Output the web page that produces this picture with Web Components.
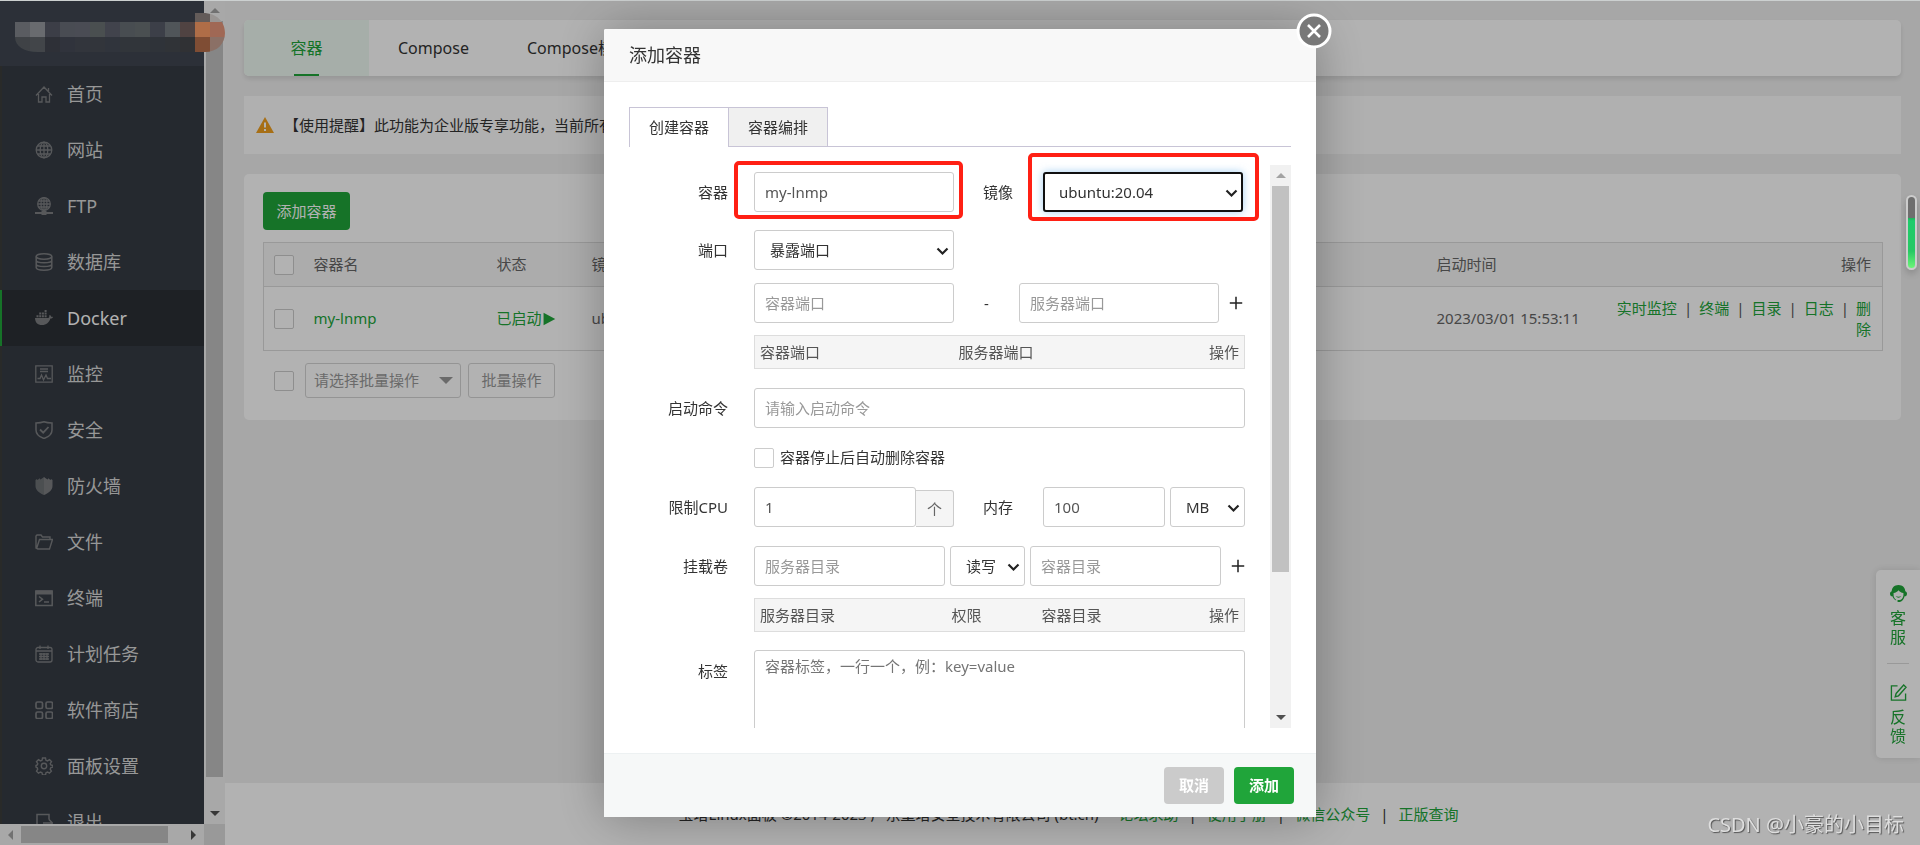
<!DOCTYPE html>
<html lang="zh-CN">
<head>
<meta charset="utf-8">
<title>Docker - 容器</title>
<style>
  html, body { margin: 0; height: 100%; }
  body { font: 15px/21px "Noto Sans", "Noto Sans CJK SC", sans-serif; color: #333; background: #f0f0f0; overflow: hidden; }
</style>
</head>
<body>
<panel-app></panel-app>
<script>
/* Registers an element whose shadow root is cloned from the markup; setup(root, element) runs on connection */
const define = (name, html, setup = () => {}) => {
  const template = document.createElement('template');
  template.innerHTML = html;
  customElements.define(name, class extends HTMLElement {
    constructor() {
      super();
      this.attachShadow({ mode: 'open' }).append(template.content.cloneNode(true));
    }
    connectedCallback() {
      setup(this.shadowRoot, this);
    }
  });
};

/* Icons, chosen by the "name" attribute */
const icons = {
  home: '<g fill="none" stroke="currentColor" stroke-width="1.3"><path d="M1 10.500 9 2l8 8.500M3.500 9v8H7v-5h4v5h3.500V9M13.500 6V3"/></g>',
  globe: '<g fill="none" stroke="currentColor" stroke-width="1.3"><circle cx="9" cy="9" r="7.800"/><ellipse cx="9" cy="9" rx="3.800" ry="7.800"/><path d="M9 1v16M1 9h16M2.500 5h13M2.500 13h13"/></g>',
  ftp: '<g fill="none" stroke="currentColor" stroke-width="1.3"><circle cx="9" cy="7" r="6.300"/><ellipse cx="9" cy="7" rx="3" ry="6.300"/><path d="M9 1v12M3 7h12M3.500 4h11M3.500 10h11"/><path d="M0 16h18" stroke-width="2"/></g><rect x="6.500" y="14" width="5" height="4" fill="currentColor"/>',
  database: '<g fill="none" stroke="currentColor" stroke-width="1.5"><ellipse cx="9" cy="3.500" rx="7.800" ry="2.700"/><path d="M1.200 3.500v11c0 3.500 15.600 3.500 15.600 0v-11M1.200 7.200c0 3.400 15.600 3.400 15.600 0M1.200 10.900c0 3.400 15.600 3.400 15.600 0"/></g>',
  docker: '<g fill="currentColor"><path d="M0 9h13c1 0 1.500-.8 1.200-2.500l.8-.5c.8.500 1 1 1.100 1.700.7-.1 1.500 0 1.900.3-.4 1-1.300 1.500-2.600 1.500C14 13.500 11.500 16 7 16 2.500 16 .2 13.500 0 9z"/><path d="M1.500 6.200h2v2h-2zM4.200 6.200h2v2h-2zM6.900 6.200h2v2h-2zM9.600 6.200h2v2h-2zM4.200 3.600h2v2h-2zM6.900 3.600h2v2h-2zM9.600 3.600h2v2h-2zM9.600 1h2v2h-2z"/></g>',
  monitor: '<g fill="none" stroke="currentColor" stroke-width="1.3"><path d="M.8.800h16.400v16.400H.8zM5 4h8M5 6.500h8M2.500 13.500H5L6.500 10l2 5 2.500-5 1.500 3.500h3.500"/></g>',
  shield: '<g fill="none" stroke="currentColor" stroke-width="1.5"><path d="M9 .800c3 1.200 5.500 1.200 8 1.200v7c0 4-3.500 7-8 8.500C4.500 16 1 13 1 9V2c2.500 0 5 0 8-1.200z"/><path d="m5 8.500 3.200 3.200L13.500 6" stroke-width="1.8"/></g>',
  wall: '<path fill="currentColor" opacity=".8" d="M9 0v18C4 16 .5 13 .5 9V3L2 2v1l2-1V1l1.500 1.500L7 1.500z"/><path fill="currentColor" d="M9 0v18c5-2 8.500-5 8.500-9V3L16 2v1l-2-1V1l-1.500 1.500-1.500-1z"/>',
  folder: '<path fill="none" stroke="currentColor" stroke-width="1.4" d="M3 16 1 15V3l1-1h4l1.500 2H15v2.500M1.500 15.800 4.500 6.500h13L14.500 16H2"/>',
  terminal: '<g fill="none" stroke="currentColor" stroke-width="1.5"><path d="M.8 2h16.400v14.500H.8zM4 7.500l3.500 2.700L4 13M9 13h5"/></g><path fill="currentColor" d="M1 1.500h16v4H1z"/>',
  calendar: '<g fill="none" stroke="currentColor" stroke-width="1.3"><rect x="1" y="2.500" width="16" height="14.500" rx="2"/><path d="M1 6h16M5 .500V4M13 .500V4M4 9h10M4 11.500h10M4 14h10M6 8v7M9 8v7M12 8v7"/></g>',
  apps: '<g fill="none" stroke="currentColor" stroke-width="1.7"><rect x="1" y="1" width="6.500" height="6.500" rx="1.500"/><rect x="11" y="1" width="6.500" height="6.500" rx="1.500"/><rect x="1" y="11" width="6.500" height="6.500" rx="1.500"/><rect x="11" y="11" width="6.500" height="6.500" rx="1.500"/></g>',
  gear: '<g fill="none" stroke="currentColor" stroke-width="1.4"><circle cx="9" cy="9" r="2.700"/><path d="M7.500 1h3l.5 2.300 1.500.6 2-1.300 2 2.100-1.300 2 .6 1.300 2.200.5v1.500l-2.200.7-.6 1.500 1.200 2-2 2-1.900-1.200-1.500.7-.5 2.300h-3L7 15.700l-1.500-.7-2 1.200-2-2 1.200-2-.5-1.500L1 10V8.500L2.200 8l.6-1.300-1.300-2 2-2.100 2 1.300L7 3.300z"/></g>',
  exit: '<path fill="none" stroke="currentColor" stroke-width="1.5" d="M14 6.500V1.500H2V17h11M8 10h9M14 6.500l3.500 3.500-3.500 3.500"/>',
  warn: '<path fill="#f0a020" d="M9 1 18 17H0z"/><path stroke="#fff" stroke-width="2" d="M9 6.500v5M9 13v2"/>',
  service: '<path fill="currentColor" d="M9 0C4.500 0 2 3 1.800 6.500.500 7 0 8 0 9.200c0 1.600 1 2.800 2.500 2.800.8 2 2 3.500 4 4.500v-1C5 14.500 4 13 3.800 11V8.500C6 8.200 8 7 9 5.500c1 1.500 3 2.700 5.200 3V11c-.4 3-2 4.500-4.200 5H8v2h2.500c2.500-.8 4.200-2.800 5-6 1.500 0 2.500-1.200 2.500-2.800 0-1.200-.500-2.200-1.800-2.700C16 3 13.500 0 9 0zM6 12c1.500 2 4.500 2 6 0-1.500.7-4.500.7-6 0z"/>',
  edit: '<path fill="none" stroke="currentColor" stroke-width="1.4" d="M8 2H1.500v15h15v-7M14.500 1 17 3.500 9 12.500l-3.500 1 1-3.500z"/>',
  chevron: '<path fill="none" stroke="#222" stroke-width="2.6" d="m3 6.500 6 6 6-6"/>',
  plus: '<path stroke="#222" stroke-width="1.7" d="M9 2v14M2 9h14"/>',
  caret: '<path fill="#999" d="M2 5h14l-7 7z"/>',
  play: '<path fill="currentColor" d="M2 1v16L17 9z"/>',
  close: '<circle cx="9" cy="9" r="8" fill="#787878" stroke="#fff" stroke-width="1.5"/><path stroke="#fff" stroke-width="1.3" d="m6 6 6 6m0-6-6 6"/>'
};
customElements.define('ui-icon', class extends HTMLElement {
  constructor() {
    super();
    this.attachShadow({ mode: 'open' });
  }
  connectedCallback() {
    this.shadowRoot.innerHTML = `<style>:host{display:inline-block;width:18px;height:18px;flex:none}svg{display:block;width:100%;height:100%}</style>
      <svg viewBox="0 0 18 18" aria-hidden="true">${icons[this.getAttribute('name')] || ''}</svg>`;
  }
});

/* Scroll bar: arrow, track with a thumb (sized by --thumb), arrow */
define('scroll-bar', `
<style>
  :host { display: flex; flex-direction: column; align-items: center; width: 21px; background: #f1f1f1; }
  :host([horizontal]) { flex-direction: row; width: auto; height: 21px; }
  i { flex: none; width: 21px; height: 21px; display: grid; place-items: center; }
  i::before { content: ""; border: 5px solid transparent; border-top-width: 0; border-bottom-color: #a3a3a3; }
  i.end::before { border: 5px solid transparent; border-bottom-width: 0; border-top-color: #505050; }
  :host([horizontal]) i::before { border: 5px solid transparent; border-left-width: 0; border-right-color: #a3a3a3; }
  :host([horizontal]) i.end::before { border: 5px solid transparent; border-right-width: 0; border-left-color: #505050; }
  .track { flex: 1; width: 17px; display: flex; flex-direction: column; }
  .thumb { flex: 0 0 var(--thumb); background: #c1c1c1; }
  :host([horizontal]) .track { flex-direction: row; width: auto; height: 17px; }
</style>
<i></i><div class="track"><div class="thumb"></div></div><i class="end"></i>`);

define('menu-item', `
<style>
  :host { display: block; height: 56px; }
  a { display: flex; align-items: center; gap: 14px; height: 56px; box-sizing: border-box; padding-left: 33px; border-left: 2px solid #3b3d3c;
      font-size: 18px; color: #d8d8d8; text-decoration: none; white-space: nowrap; }
  ui-icon { color: #7d7f82; }
  :host([active]) a { background: #2c3035; border-color: #20a53a; color: #fff; }
  :host([active]) ui-icon { color: #a3a3a3; }
</style>
<a href="#"><slot name="icon"></slot><span><slot></slot></span></a>`);

define('side-menu', `
<style>
  :host { display: grid; grid-template: minmax(0, 1fr) 21px / minmax(0, 1fr) 21px; height: 100vh; background: #353b44; }
  .view { overflow: hidden; }
  header { height: 66px; background: #3f4651; }
  ui-icon { color: #7d7f82; }
  .v { --thumb: 756px; }
  .h { --thumb: 147px; }
  .corner { background: #dcdcdc; }
</style>
<div class="view">
  <header></header>
  <nav></nav>
</div>
<scroll-bar class="v"></scroll-bar>
<scroll-bar class="h" horizontal></scroll-bar>
<div class="corner"></div>`, root => {
  const items = [['home', '首页'], ['globe', '网站'], ['ftp', 'FTP'], ['database', '数据库'], ['docker', 'Docker'], ['monitor', '监控'],
    ['shield', '安全'], ['wall', '防火墙'], ['folder', '文件'], ['terminal', '终端'], ['calendar', '计划任务'], ['apps', '软件商店'], ['gear', '面板设置'], ['exit', '退出']];
  root.querySelector('nav').innerHTML = items.map(([icon, text]) =>
    `<menu-item${icon === 'docker' ? ' active' : ''}><ui-icon slot="icon" name="${icon}"></ui-icon>${text}</menu-item>`).join('');
});

define('account-badge', `
<style>
  :host { display: block; width: 228px; height: 66px; }
  svg { display: block; }
</style>
<svg width="228" height="66" aria-hidden="true">
  <clipPath id="c"><path d="M15 22h180v-9h8c14 0 22 9 22 20s-8 19-20 19H38C24 52 15 46 15 37z"/></clipPath>
  <g clip-path="url(#c)" id="g"></g>
</svg>`, root => {
  const top = ['#81858b', '#979aa0', '#565a66', '#696d78', '#6a6d79', '#6b7273', '#5d616d', '#686f74', '#6b7274', '#575b67', '#737a80', '#73615f', '#fb9c66', '#e5967a'];
  const low = ['#5b5f65', '#5f6469', '#42464f', '#464a56', '#484d57', '#484d55', '#464b56', '#474c54', '#474c54', '#444952', '#454a50', '#45474b', '#b66f4b', '#c7a193'];
  const cell = (x, y, h, fill) => `<rect x="${x}" y="${y}" width="15" height="${h}" fill="${fill}"/>`;
  root.getElementById('g').innerHTML =
    cell(195, 13, 9, '#8f8380') + cell(210, 13, 9, '#dcd6d3') +
    top.map((c, i) => cell(15 + i * 15, 22, 15, c)).join('') +
    low.map((c, i) => cell(15 + i * 15, 37, 15, c)).join('');
});

define('tab-bar', `
<style>
  :host { display: flex; height: 56px; background: #fff; border-radius: 5px; box-shadow: 0 3px 5px rgba(0,0,0,.1); }
  a { display: grid; justify-items: center; grid-template-rows: 54px 2px; padding: 0 29px; color: #333; text-decoration: none; font-size: 16px; line-height: 56px; white-space: nowrap; }
  a.on { background: #eefaf2; color: #20a53a; padding: 0; width: 125px; border-radius: 5px 0 0 5px; }
  a.on::after { content: ""; width: 25px; background: #20a53a; }
</style>
<a class="on" href="#">容器</a><a href="#">Compose</a><a href="#">Compose模板</a>`);

define('alert-bar', `
<style>
  :host { display: flex; align-items: center; gap: 10px; height: 58px; padding-left: 12px; background: #fcfcfc; white-space: nowrap; }
</style>
<ui-icon name="warn"></ui-icon><span><slot></slot></span>`);

define('container-list', `
<style>
  :host { display: block; background: #fff; border-radius: 5px; padding: 18px 18px 22px 19px; color: #666; }
  button { font: inherit; box-sizing: border-box; }
  .add { display: block; width: 87px; height: 38px; border: 0; border-radius: 4px; background: #20a53a; color: #fff; padding: 0; }
  table { width: 100%; margin: 12px 0; border-collapse: collapse; table-layout: fixed; border: 1px solid #dcdcdc; text-align: left; }
  th { font-weight: normal; height: 43px; background: #f6f6f6; border-bottom: 1px solid #dcdcdc; }
  td { height: 63px; }
  th, td { padding: 0; }
  th:last-child, td:last-child { text-align: right; padding-right: 11px; }
  a { color: #20a53a; text-decoration: none; }
  .state { display: flex; align-items: center; }
  .state ui-icon { width: 14px; height: 14px; }
  input { appearance: none; display: block; box-sizing: border-box; width: 20px; height: 20px; margin: 0 0 0 10px; border: 1px solid #ccc; border-radius: 2px; background: #fff; }
  s { text-decoration: none; padding: 0 7px; color: #555; }
  .ops { word-break: break-all; }
  .batch { display: flex; align-items: center; gap: 7px; padding-left: 1px; }
  .batch input { margin-right: 4px; }
  .pick { display: grid; align-items: center; width: 156px; }
  .pick > * { grid-area: 1 / 1; }
  .pick ui-icon { justify-self: end; margin-right: 6px; pointer-events: none; }
  select { appearance: none; font: inherit; color: #999; width: 100%; height: 35px; box-sizing: border-box; border: 1px solid #d4d4d4; border-radius: 3px; background: #fff; padding: 0 8px; }
  .batch button { width: 87px; height: 35px; padding: 0; color: #999; border: 1px solid #d4d4d4; border-radius: 3px; background: #fff; }
</style>
<button class="add">添加容器</button>
<table>
  <colgroup><col style="width:50px"><col style="width:183px"><col style="width:95px"><col><col style="width:180px"><col style="width:266px"></colgroup>
  <thead><tr><th><input type="checkbox" aria-label="全选"></th><th>容器名</th><th>状态</th><th>镜像</th><th>启动时间</th><th>操作</th></tr></thead>
  <tbody><tr>
    <td><input type="checkbox" aria-label="my-lnmp"></td>
    <td><a href="#">my-lnmp</a></td>
    <td><a class="state" href="#">已启动<ui-icon name="play"></ui-icon></a></td>
    <td>ubuntu:20.04</td>
    <td>2023/03/01 15:53:11</td>
    <td class="ops"><a href="#">实时监控</a><s>|</s><a href="#">终端</a><s>|</s><a href="#">目录</a><s>|</s><a href="#">日志</a><s>|</s><a href="#">删除</a></td>
  </tr></tbody>
</table>
<div class="batch">
  <input type="checkbox" aria-label="选择全部">
  <div class="pick"><select aria-label="批量操作"><option>请选择批量操作</option></select><ui-icon name="caret"></ui-icon></div>
  <button>批量操作</button>
</div>`);

define('page-footer', `
<style>
  :host { display: flex; justify-content: center; align-items: center; height: 62px; background: #fff; white-space: nowrap; padding-right: 8px; }
  a { color: #20a53a; text-decoration: none; }
  .copy { margin-right: 20px; }
  s { text-decoration: none; padding: 0 10px; }
</style>
<span class="copy">宝塔Linux面板 ©2014-2023 广东堡塔安全技术有限公司 (bt.cn)</span>
<a href="#">论坛求助</a><s>|</s><a href="#">使用手册</a><s>|</s><a href="#">微信公众号</a><s>|</s><a href="#">正版查询</a>`);

define('float-tools', `
<style>
  :host { position: fixed; right: 0; bottom: 87px; box-sizing: border-box; width: 44px; padding: 15px 11px 12px; background: #fff; border-radius: 5px 0 0 5px; box-shadow: 0 0 8px rgba(0,0,0,.12); }
  a { display: grid; justify-items: center; gap: 7px; color: #20a53a; text-decoration: none; font-size: 16px; line-height: 19px; text-align: center; }
  span { width: 16px; }
  a + a { margin-top: 16px; padding-top: 20px; border-top: 1px solid #dcdcdc; }
  ui-icon { width: 17px; height: 17px; }
</style>
<a href="#"><ui-icon name="service"></ui-icon><span>客服</span></a>
<a href="#"><ui-icon name="edit"></ui-icon><span>反馈</span></a>`);

define('speed-gauge', `
<style>
  :host { position: fixed; right: 3px; top: 195px; box-sizing: border-box; width: 11px; height: 75px; border: 2px solid #ccc; border-radius: 6px;
    background: linear-gradient(#6e6e6e 21px, #1db45c 21px, #1ecb6b 24px, #27c864 54px, #6df579 100%); box-shadow: 0 4px 8px rgba(0,0,0,.2); }
</style>`);

define('form-row', `
<style>
  :host { display: grid; grid-template-columns: 99px minmax(0, 1fr); column-gap: 26px; align-items: center; margin-bottom: var(--after, 19px); }
  .label { text-align: right; white-space: nowrap; }
  .controls { display: flex; align-items: center; }
</style>
<div class="label"><slot name="label"></slot></div><div class="controls"><slot></slot></div>`);

define('container-form', `
<style>
  :host { display: grid; grid-template-columns: minmax(0, 1fr) 21px; height: 563px; }
  .view { padding: 7px 25px 0 0; box-sizing: border-box; height: 563px; clip-path: inset(-20px 0 0 0); }
  input, select, textarea { font: inherit; color: #555; box-sizing: border-box; border: 1px solid #ccc; border-radius: 3px; background: #fff; margin: 0; }
  input[type=text] { height: 40px; padding: 0 10px; min-width: 0; flex: none; }
  ::placeholder { color: #999; opacity: 1; }
  textarea { display: block; width: 100%; height: 88px; padding: 5px 10px; resize: both; }
  textarea::placeholder { color: #757575; }
  .sel { display: grid; align-items: center; flex: none; }
  .sel > * { grid-area: 1 / 1; }
  .sel ui-icon { width: 15px; height: 15px; justify-self: end; margin-right: 4px; pointer-events: none; }
  select { appearance: none; width: 100%; height: 40px; padding: 0 15px; color: #333; }
  .w200 { width: 200px; }
  .w191 { width: 191px; }
  .w162 { width: 162px; }
  .w122 { width: 122px; }
  .w75 { width: 75px; }
  .full { width: 100%; }
  .focus { border: 2px solid #101010; box-shadow: 0 0 8px rgba(102,175,233,.6); padding: 0 14px; }
  .second { flex: none; width: 89px; padding-left: 29px; box-sizing: border-box; }
  .dash { flex: none; width: 65px; text-align: center; }
  .add { flex: none; border: 0; background: none; padding: 0; margin-left: 9px; width: 16px; height: 16px; }
  .add ui-icon { display: block; width: 16px; height: 16px; }
  .unit { flex: none; box-sizing: border-box; width: 38px; height: 37px; align-self: flex-end; border: 1px solid #ccc; border-left: 0; border-radius: 0 3px 3px 0; background: #f5f5f5; text-align: center; line-height: 37px; color: #666; }
  table { width: 100%; border-collapse: collapse; table-layout: fixed; background: #f5f5f5; border: 1px solid #ddd; text-align: left; color: #555; }
  th { font-weight: normal; height: 33px; padding: 0 5px; box-sizing: border-box; }
  th:last-child { text-align: right; }
  .box { display: flex; align-items: center; gap: 6px; }
  .box input { appearance: none; width: 20px; height: 20px; border-radius: 2px; }
  .gap { flex: none; width: 5px; }
  .mark { position: relative; }
  .mark::after { content: ""; position: absolute; inset: -11px -9px -7px -20px; border: 4px solid #ff2014; border-radius: 5px; pointer-events: none; }
  .mark.img::after { inset: -19px -16px -9px -15px; }
  scroll-bar { --thumb: 386px; }
</style>
<div class="view">
  <form-row style="--after:18px">
    <label slot="label" for="name">容器</label>
    <div class="mark"><input id="name" class="w200" type="text" value="my-lnmp"></div>
    <label class="second" for="image">镜像</label>
    <div class="sel w200 mark img"><select id="image" class="focus"><option>ubuntu:20.04</option></select><ui-icon name="chevron"></ui-icon></div>
  </form-row>
  <form-row style="--after:13px">
    <label slot="label" for="port">端口</label>
    <div class="sel w200"><select id="port"><option>暴露端口</option></select><ui-icon name="chevron"></ui-icon></div>
  </form-row>
  <form-row style="--after:12px">
    <input class="w200" type="text" placeholder="容器端口" aria-label="容器端口">
    <span class="dash">-</span>
    <input class="w200" type="text" placeholder="服务器端口" aria-label="服务器端口">
    <button class="add" type="button" aria-label="添加端口"><ui-icon name="plus"></ui-icon></button>
  </form-row>
  <form-row>
    <table><thead><tr><th style="width:199px">容器端口</th><th>服务器端口</th><th>操作</th></tr></thead></table>
  </form-row>
  <form-row>
    <label slot="label" for="cmd">启动命令</label>
    <input id="cmd" class="full" type="text" placeholder="请输入启动命令">
  </form-row>
  <form-row>
    <label class="box"><input type="checkbox">容器停止后自动删除容器</label>
  </form-row>
  <form-row>
    <label slot="label" for="cpu">限制CPU</label>
    <input id="cpu" class="w162" type="text" value="1"><span class="unit">个</span>
    <label class="second" for="mem">内存</label>
    <input id="mem" class="w122" type="text" value="100">
    <span class="gap"></span>
    <div class="sel w75"><select aria-label="内存单位"><option>MB</option></select><ui-icon name="chevron"></ui-icon></div>
  </form-row>
  <form-row style="--after:12px">
    <label slot="label" for="vol">挂载卷</label>
    <input id="vol" class="w191" type="text" placeholder="服务器目录">
    <span class="gap"></span>
    <div class="sel w75"><select aria-label="权限"><option>读写</option></select><ui-icon name="chevron"></ui-icon></div>
    <span class="gap"></span>
    <input class="w191" type="text" placeholder="容器目录" aria-label="容器目录">
    <button class="add" type="button" aria-label="添加挂载卷"><ui-icon name="plus"></ui-icon></button>
  </form-row>
  <form-row style="--after:18px">
    <table><thead><tr><th style="width:192px">服务器目录</th><th style="width:90px">权限</th><th>容器目录</th><th>操作</th></tr></thead></table>
  </form-row>
  <form-row>
    <label slot="label" for="tags" style="display:block;height:66px">标签</label>
    <textarea id="tags" placeholder="容器标签，一行一个，例：key=value"></textarea>
  </form-row>
</div>
<scroll-bar></scroll-bar>`);

define('modal-dialog', `
<style>
  :host { position: fixed; inset: 0; display: grid; place-items: center; background: rgba(0,0,0,.3); border-top: 1px solid #ccd0d0; box-sizing: border-box; }
  section { position: relative; width: 712px; background: #fff; border-radius: 2px; box-shadow: 1px 1px 50px rgba(0,0,0,.3); }
  h2 { margin: 0; height: 53px; box-sizing: border-box; padding: 0 25px; border-bottom: 1px solid #eee; background: #f8f8f8; font-size: 18px; line-height: 52px; font-weight: normal; border-radius: 2px 2px 0 0; }
  .body { padding: 25px; }
  .close { position: absolute; top: -16px; right: -16px; width: 36px; height: 36px; padding: 0; border: 0; background: none; }
  .close ui-icon { width: 36px; height: 36px; }
  footer { display: flex; justify-content: flex-end; gap: 10px; height: 64px; box-sizing: border-box; padding: 13px 22px; border-top: 1px solid #edf1f2; background: #f6f8f8; }
  footer button { width: 60px; height: 37px; padding: 0; border: 0; border-radius: 4px; background: #cbcbcb; color: #fff; font: inherit; font-weight: bold; }
  footer .ok { background: #20a53a; }
</style>
<section role="dialog" aria-labelledby="t">
  <h2 id="t"><slot name="title"></slot></h2>
  <button class="close" aria-label="关闭"><ui-icon name="close"></ui-icon></button>
  <div class="body"><slot></slot></div>
  <footer><button>取消</button><button class="ok">添加</button></footer>
</section>`);

define('dialog-tabs', `
<style>
  :host { display: flex; height: 40px; margin-bottom: 18px; }
  button { width: 99px; box-sizing: border-box; padding: 0; font: inherit; color: #333; background: #f0f0f0; border: 1px solid #c8c4d6; border-left: 0; }
  button.on { width: 100px; background: #fff; border-left: 1px solid #c8c4d6; border-bottom: 0; }
  i { flex: 1; border-bottom: 1px solid #c8c4d6; }
</style>
<button class="on">创建容器</button><button>容器编排</button><i></i>`);

define('water-mark', `
<style>
  :host { position: fixed; right: 16px; bottom: 6px; font-size: 20px; line-height: 28px; color: #dedede; text-shadow: 1px 1px 1px #555; white-space: nowrap; }
</style>
<slot></slot>`);

define('panel-app', `
<style>
  :host { display: grid; grid-template-columns: 225px minmax(0, 1fr); height: 100vh; }
  main { display: flex; flex-direction: column; height: 100vh; }
  .content { display: grid; gap: 20px; padding: 20px 19px; }
  page-footer { margin-top: auto; }
  account-badge { position: absolute; top: 0; left: 0; }
</style>
<side-menu></side-menu>
<main>
  <div class="content">
    <tab-bar></tab-bar>
    <alert-bar>【使用提醒】此功能为企业版专享功能，当前所有</alert-bar>
    <container-list></container-list>
  </div>
  <page-footer></page-footer>
</main>
<account-badge></account-badge>
<float-tools></float-tools>
<modal-dialog>
  <span slot="title">添加容器</span>
  <dialog-tabs></dialog-tabs>
  <container-form></container-form>
</modal-dialog>
<speed-gauge></speed-gauge>
<water-mark>CSDN @小豪的小目标</water-mark>`);
</script>
</body>
</html>
